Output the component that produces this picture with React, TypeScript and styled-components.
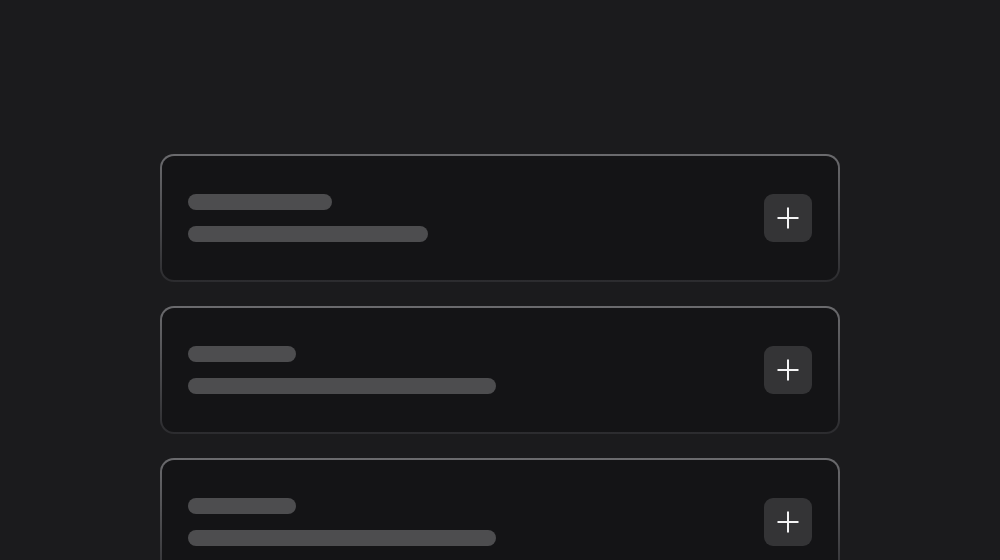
import styled, { createGlobalStyle } from 'styled-components'

const Global = createGlobalStyle`
  html, body {
    margin: 0;
    padding: 0;
    background: #1b1b1d;
    font-family: Inter, "Noto Sans", sans-serif;
  }
`

const Page = styled.div`
  height: 560px;
  overflow: hidden;
  display: flex;
  flex-direction: column;
  align-items: center;
  gap: 24px;
  padding-top: 154px;
  box-sizing: border-box;
`

const Card = styled.div`
  width: 680px;
  height: 128px;
  box-sizing: border-box;
  flex-shrink: 0;
  border: 2px solid transparent;
  border-radius: 14px;
  background:
    linear-gradient(#141416, #141416) padding-box,
    linear-gradient(to bottom, #6b6b6e, #2c2c2f) border-box;
  display: flex;
  align-items: center;
  justify-content: space-between;
  padding: 0 26px;
`

const Lines = styled.div`
  display: flex;
  flex-direction: column;
  gap: 16px;
`

const Bar = styled.div<{ $w: number }>`
  width: ${(p) => p.$w}px;
  height: 16px;
  border-radius: 8px;
  background: #4d4d4f;
`

const AddButton = styled.button`
  width: 48px;
  height: 48px;
  border: none;
  border-radius: 9px;
  background: #343436;
  display: flex;
  align-items: center;
  justify-content: center;
  padding: 0;
  cursor: pointer;
`

const items = [
  { a: 144, b: 240 },
  { a: 108, b: 308 },
  { a: 108, b: 308 },
]

const Plus = () => (
  <svg width="24" height="24" viewBox="0 0 24 24" fill="none" stroke="#f4f4f5" strokeWidth="2">
    <path d="M12 1.5v21M1.5 12h21" />
  </svg>
)

const App = () => {
  return (
    <>
      <Global />
      <Page>
        {items.map((it, i) => (
          <Card key={i}>
            <Lines>
              <Bar $w={it.a} />
              <Bar $w={it.b} />
            </Lines>
            <AddButton aria-label="add">
              <Plus />
            </AddButton>
          </Card>
        ))}
      </Page>
    </>
  )
}

export default App
